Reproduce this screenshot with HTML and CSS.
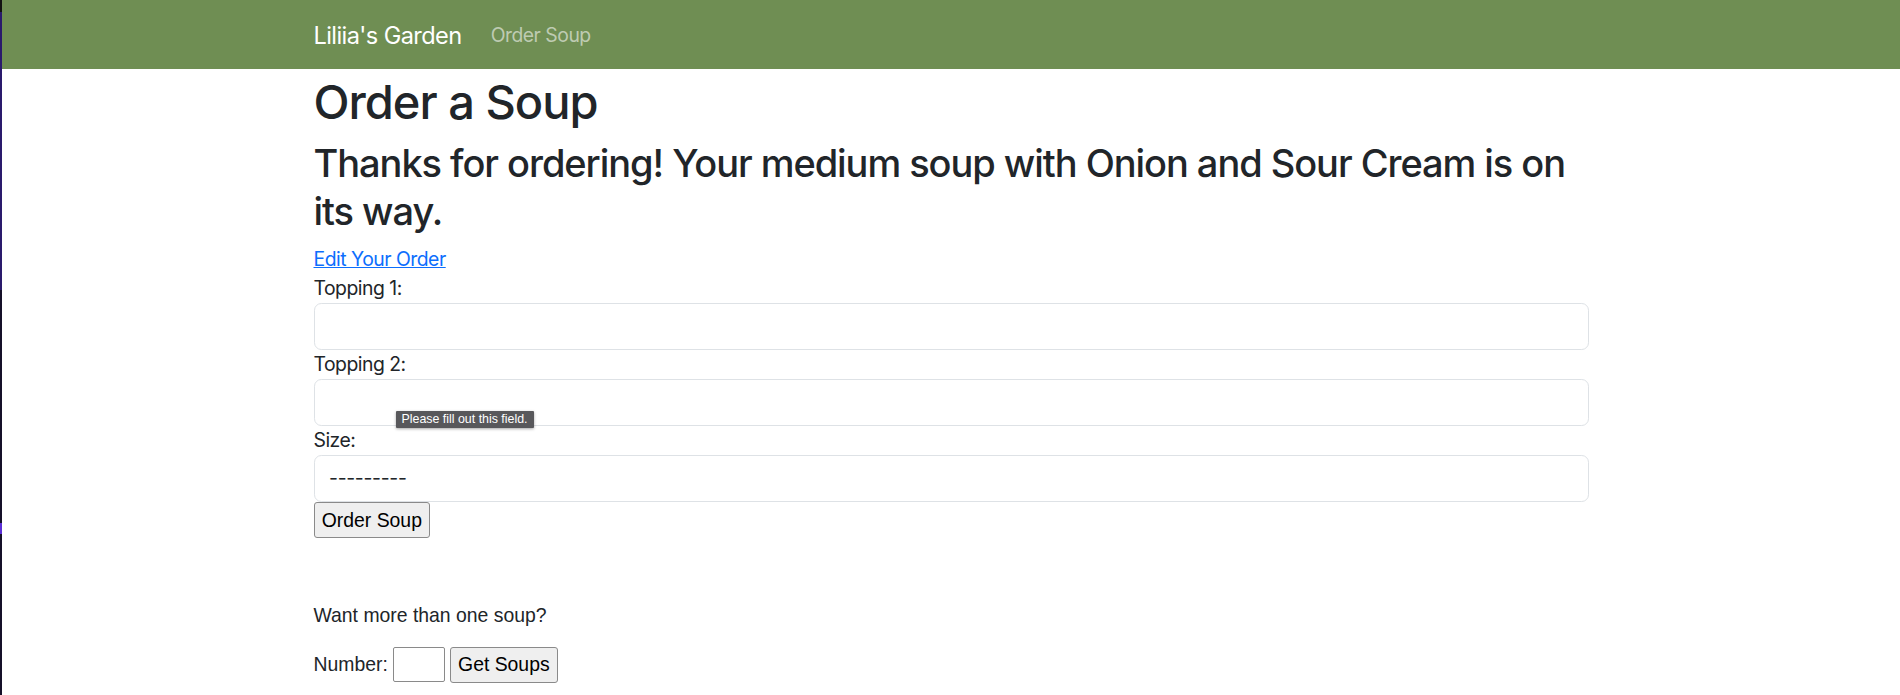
FILE: index.html
```html
<!DOCTYPE html>
<html lang="en">
<head>
<meta charset="utf-8">
<title>Order a Soup</title>
<link rel="stylesheet" href="styles.css">
</head>
<body>
<div class="frame">
  <div class="edge"></div>
  <div class="page">
    <nav class="navbar">
      <div class="container nav-inner">
        <a class="brand" href="#">Liliia's Garden</a>
        <a class="nav-link" href="#">Order Soup</a>
      </div>
    </nav>
    <main class="container">
      <h1 class="title">Order a Soup</h1>
      <h2 class="thanks">Thanks for ordering! Your medium soup with Onion and Sour Cream is on its way.</h2>
      <a class="edit-link" href="#">Edit Your Order</a>
      <form class="order-form">
        <label class="field-label" for="t1">Topping 1:</label>
        <input class="form-control" id="t1" type="text">
        <label class="field-label" for="t2">Topping 2:</label>
        <div class="field-wrap">
          <input class="form-control" id="t2" type="text">
          <div class="tooltip">Please fill out this field.</div>
        </div>
        <label class="field-label" for="size">Size:</label>
        <div class="form-control select-like" id="size">---------</div>
        <div><button class="btn-native" type="button">Order Soup</button></div>
      </form>
      <section class="multi">
        <p class="multi-q">Want more than one soup?</p>
        <div class="multi-row">
          <label for="num">Number:</label>
          <input class="num-input" id="num" type="text">
          <button class="btn-native" type="button">Get Soups</button>
        </div>
      </section>
    </main>
  </div>
</div>
</body>
</html>
```

FILE: styles.css
```css
* { box-sizing: border-box; }

html, body {
  margin: 0;
  padding: 0;
  height: 100%;
  background: #ffffff;
}

body {
  font-family: Inter, "Noto Sans", sans-serif;
  font-size: 19.39px;
  line-height: 1.5;
  color: #212529;
  overflow: hidden;
}

.frame {
  display: flex;
  min-height: 695px;
}

.edge {
  width: 2px;
  flex: 0 0 2px;
  background: linear-gradient(
    to bottom,
    #121212 0px, #121212 12px,
    #2a1a6c 12px, #2a1a6c 290px,
    #151029 290px, #151029 523px,
    #5b2fd6 523px, #5b2fd6 534px,
    #151029 534px, #151029 100%
  );
}

.page {
  flex: 1;
  min-width: 0;
}

.container {
  width: 1275px;
  margin: 0 auto;
}

.navbar {
  background: #6f8e53;
  height: 69px;
  display: flex;
  align-items: center;
  padding-top: 2px;
}

.nav-inner {
  display: flex;
  align-items: center;
}

.brand {
  color: #ffffff;
  font-size: 23.6px;
  text-decoration: none;
  margin-right: 19.39px;
  letter-spacing: -0.6px;
}

.nav-link {
  color: #becbb2;
  font-size: 19.39px;
  text-decoration: none;
  padding: 0 9.7px;
  letter-spacing: -0.5px;
}

.title {
  margin: 5px 0 9.7px;
  font-size: 47px;
  line-height: 1.2;
  font-weight: 500;
  letter-spacing: -1px;
}

.thanks {
  margin: 0 0 9.7px;
  font-size: 38px;
  line-height: 47.5px;
  font-weight: 500;
  letter-spacing: -1.05px;
}

.edit-link {
  display: block;
  color: #0d6efd;
  text-decoration: underline;
  letter-spacing: -0.5px;
}

.order-form {
  display: flex;
  flex-direction: column;
}

.field-label {
  display: block;
  letter-spacing: -0.5px;
}

.form-control {
  display: block;
  width: 100%;
  height: 47px;
  padding: 7.27px 14.54px;
  font: inherit;
  color: #212529;
  background: #ffffff;
  border: 1.2px solid #dee2e6;
  border-radius: 7.27px;
  outline: none;
}

.select-like {
  display: flex;
  align-items: center;
  letter-spacing: -0.3px;
}

.field-wrap {
  position: relative;
}

.tooltip {
  position: absolute;
  left: 82px;
  top: 32px;
  background: #58585b;
  color: #ffffff;
  font-family: "Liberation Sans", Arial, sans-serif;
  font-size: 12.4px;
  line-height: 17px;
  padding: 0 6px;
  border-radius: 1px;
  box-shadow: 0 1px 3px rgba(0, 0, 0, 0.35);
  white-space: nowrap;
}

.btn-native {
  font-family: "Liberation Sans", Arial, sans-serif;
  font-size: 19.39px;
  line-height: 1.5;
  color: #000000;
  background: #efefef;
  border: 1.2px solid #8a8a8a;
  border-radius: 3px;
  padding: 1.2px 7.27px;
  height: 36px;
  margin: 0;
}

.multi {
  margin-top: 62.5px;
  font-family: "Liberation Sans", Arial, sans-serif;
}

.multi-q {
  margin: 0 0 17px;
}

.multi-row {
  display: flex;
  align-items: center;
  gap: 5px;
}

.num-input {
  width: 52px;
  height: 35px;
  border: 1.2px solid #8a8a8a;
  border-radius: 2px;
  font: inherit;
  padding: 0 3px;
  margin: 0;
}
```
